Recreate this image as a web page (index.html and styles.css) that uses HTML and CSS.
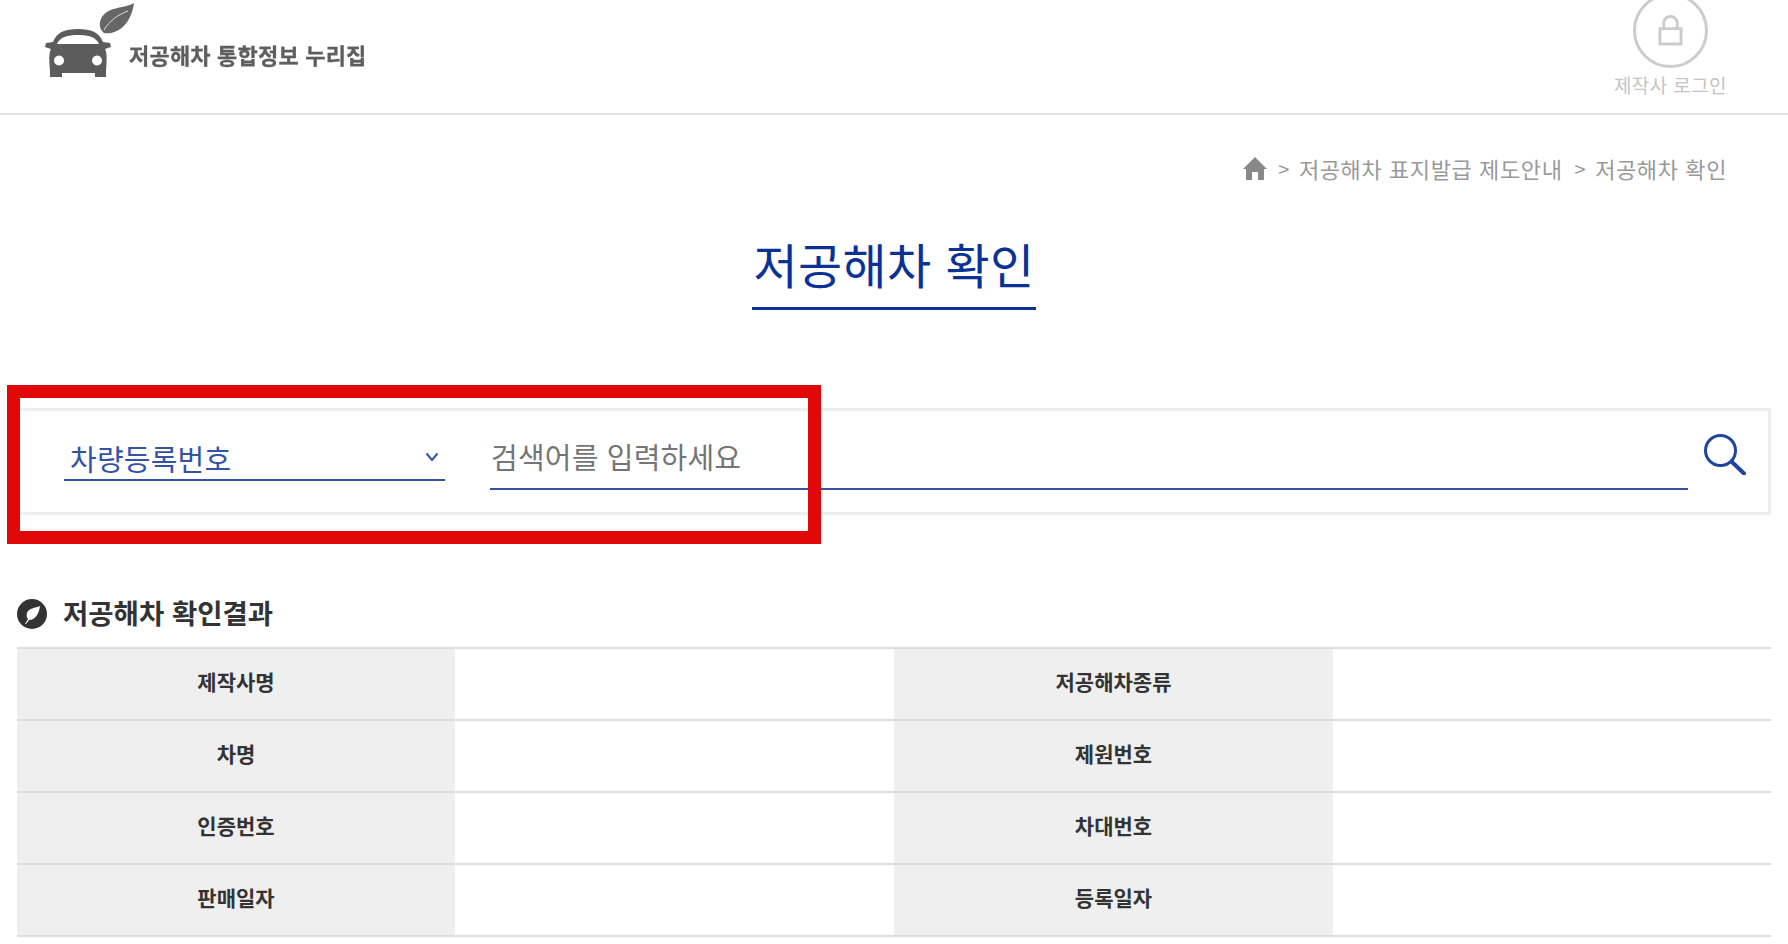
FILE: index.html
```html
<!DOCTYPE html>
<html lang="ko">
<head>
<meta charset="utf-8">
<title>저공해차 확인</title>
<link rel="stylesheet" href="styles.css">
</head>
<body>
<header class="top">
  <a class="logo">
    <span class="logo-mark">
      <svg class="leaf" viewBox="0 0 35 31"><path fill="#666" d="M35 0C25 6 8 3 2 16C-1 23 2 28 5 30C18 32 32 22 35 0Z"/><path fill="none" stroke="#ddd" stroke-width="1" d="M5 27C10 18 20 11 29 8"/></svg>
      <svg class="car" viewBox="0 0 66 48"><path fill="#5c5c5c" fill-rule="evenodd" d="M33 0C20 0 12 3 8 13L1 14L0 18L6 20C4 24 4 30 5 42L5 48L17 48L17 44L50 44L50 48L61 48L61 42C62 30 62 24 60 20L66 18L65 14L58 13C54 3 46 0 33 0ZM33 6C22 6 15 8 12 15L54 15C51 8 44 6 33 6ZM14 26.500a5 5 0 1 0 .01 0ZM52 26.500a5 5 0 1 0 .01 0Z"/></svg>
    </span>
    <span class="logo-text">저공해차 통합정보 누리집</span>
  </a>
  <a class="login">
    <span class="login-ring">
      <svg class="lock" viewBox="0 0 26 32"><path fill="none" stroke="#ccc" stroke-width="3" d="M6 14V8a7 6.500 0 0 1 14 0v6M2 14h22v16H2Z"/></svg>
    </span>
    <span class="login-text">제작사 로그인</span>
  </a>
</header>
<nav class="crumbs">
  <svg class="home" viewBox="0 0 24 23"><path fill="#888" d="M12 0L24 12L21 12L21 23L15 23L15 15L9 15L9 23L3 23L3 12L0 12Z"/></svg>
  <span class="sep">&gt;</span><span>저공해차 표지발급 제도안내</span>
  <span class="sep sep-wide">&gt;</span><span>저공해차 확인</span>
</nav>
<main class="content">
  <div class="title-wrap"><h1 class="title">저공해차 확인</h1></div>
  <form class="search">
    <div class="field-select"><span>차량등록번호</span>
      <svg class="chev" viewBox="0 0 14 10"><path fill="none" stroke="#3453a8" stroke-width="2" d="M1.500 1.500L7 8L12.500 1.500"/></svg>
    </div>
    <div class="field-input">검색어를 입력하세요</div>
    <svg class="mag" viewBox="0 0 42 41"><circle cx="16.500" cy="16.500" r="15" fill="none" stroke="#1f459e" stroke-width="3"/><path stroke="#1f459e" stroke-width="4" stroke-linecap="round" d="M28 28L40 39.500"/></svg>
    <div class="highlight"></div>
  </form>
  <h2 class="sub">
    <svg class="sub-icon" viewBox="0 0 30 30"><circle cx="15" cy="15" r="15" fill="#333"/><path fill="#fff" d="M23 7C18 9 12 9 10 14C9 17 10 19 11 20L8 25L9 25L12 21C18 21 22 15 23 7Z"/></svg>
    <span class="sub-text">저공해차 확인결과</span>
  </h2>
  <div class="grid">
    <div class="th">제작사명</div><div class="td"></div><div class="th">저공해차종류</div><div class="td"></div>
    <div class="th">차명</div><div class="td"></div><div class="th">제원번호</div><div class="td"></div>
    <div class="th">인증번호</div><div class="td"></div><div class="th">차대번호</div><div class="td"></div>
    <div class="th">판매일자</div><div class="td"></div><div class="th">등록일자</div><div class="td"></div>
  </div>
</main>
</body>
</html>
```
FILE: styles.css
```css
* { box-sizing: border-box; }
html, body { margin: 0; padding: 0; background: #fff; }
body { font-family: "Noto Sans CJK KR", "Noto Sans", sans-serif; color: #333; overflow: hidden; height: 944px; }

.top { height: 115px; border-bottom: 2px solid #e5e5e5; display: flex; justify-content: space-between; overflow: hidden; padding: 0 61px 0 45px; }
.logo { display: flex; align-items: flex-start; }
.logo-mark { position: relative; width: 84px; height: 77px; display: block; }
.car { position: absolute; left: 0; top: 29px; width: 66px; height: 48px; }
.leaf { position: absolute; left: 54px; top: 3px; width: 35px; height: 31px; }
.logo-text { font-size: 22px; font-weight: 700; color: #5e5e5e; margin-top: 38px; line-height: 32px; letter-spacing: .2px; white-space: nowrap; -webkit-text-stroke: .3px #5e5e5e; filter: blur(.3px); }
.login { display: flex; flex-direction: column; align-items: center; margin-top: -7px; }
.login-ring { width: 75px; height: 75px; border: 3px solid #ccc; border-radius: 50%; display: flex; align-items: center; justify-content: center; }
.lock { width: 25px; height: 31px; }
.login-text { font-size: 19px; line-height: 28px; color: #c4c4c4; margin-top: 3px; letter-spacing: .4px; white-space: nowrap; }

.crumbs { display: flex; align-items: center; justify-content: flex-end; height: 30px; margin-top: 38px; padding-right: 61px; font-size: 22px; letter-spacing: .6px; color: #999; white-space: pre; }
.home { width: 24px; height: 23px; margin-right: 11px; }
.sep { margin-right: 9px; font-size: 20px; }
.sep-wide { margin-left: 12px; }

.content { padding: 0 17px; }
.title-wrap { display: flex; justify-content: center; margin-top: 45px; }
.title { margin: 0; padding: 0 1px; height: 82px; border-bottom: 3px solid #0a3196; font-size: 48px; font-weight: 400; line-height: 70px; letter-spacing: .4px; color: #0a3196; white-space: nowrap; }

.search { position: relative; display: flex; align-items: flex-start; height: 107px; margin-top: 98px; border: 3px solid #eee; padding-left: 44px; }
.field-select { width: 381px; height: 62px; margin-top: 8px; padding: 0 6px 0 6px; border-bottom: 2px solid #3453a8; color: #3453a8; font-size: 29px; letter-spacing: .2px; line-height: 78px; display: flex; justify-content: space-between; white-space: nowrap; }
.chev { width: 14px; height: 10px; margin-top: 33px; }
.field-input { width: 1198px; height: 72px; margin: 7px 0 0 45px; padding-left: 1px; border-bottom: 2px solid #3453a8; color: #757575; font-size: 29px; letter-spacing: .2px; line-height: 76px; white-space: nowrap; }
.mag { width: 42px; height: 41px; margin: 23px 0 0 16px; }
.highlight { position: absolute; left: -13px; top: -26px; width: 814px; height: 159px; border: 13px solid #e00808; }

.sub { display: flex; align-items: center; gap: 16px; margin: 79px 0 0; height: 40px; font-size: 27.500px; font-weight: 700; color: #333; white-space: nowrap; }
.sub-text { margin-top: -4px; }
.sub-icon { width: 30px; height: 30px; }

.grid { display: grid; grid-template-columns: 438px 439px 439px 438px; grid-auto-rows: 72px; margin-top: 13px; border-top: 2px solid #ddd; }
.th, .td { border-bottom: 2px solid #ddd; }
.th { background: #efefef; display: flex; align-items: center; justify-content: center; padding-bottom: 7px; font-size: 21px; font-weight: 700; color: #333; }
```
